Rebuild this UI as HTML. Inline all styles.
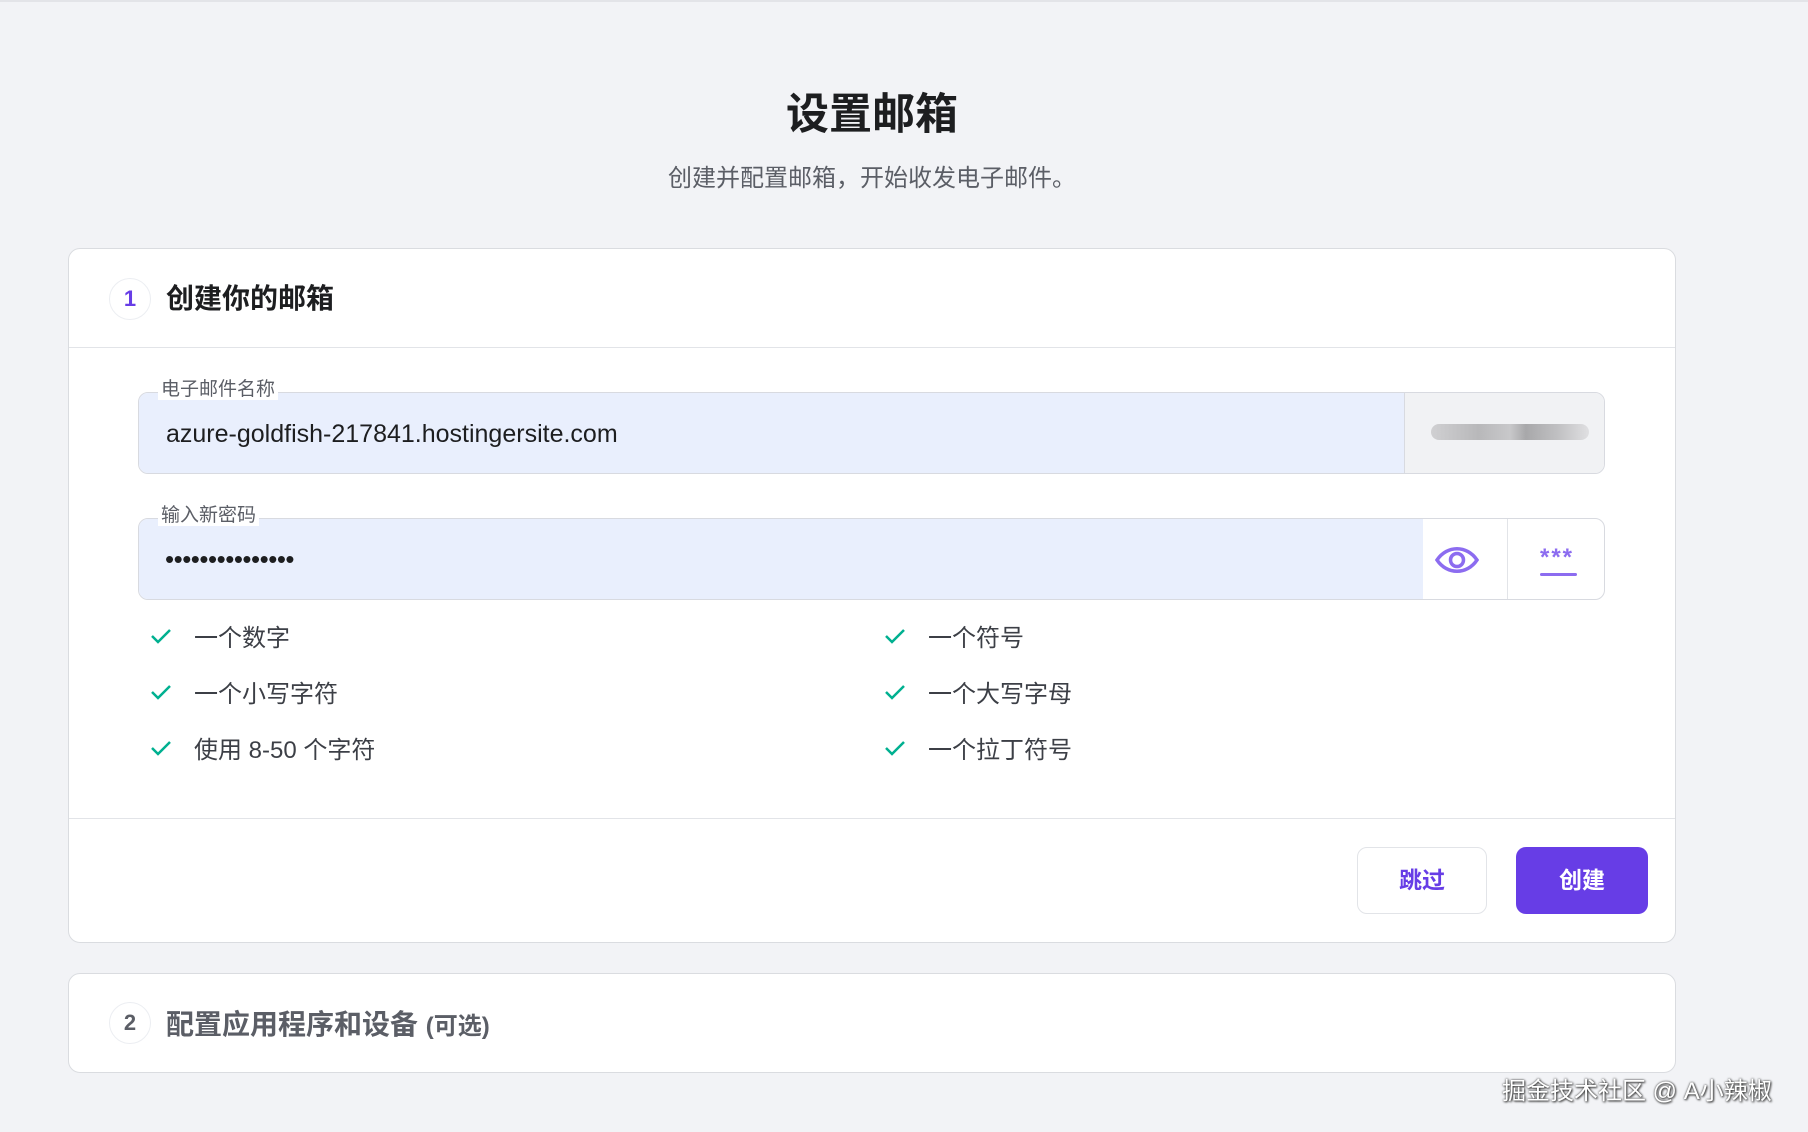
<!DOCTYPE html>
<html><head><meta charset="utf-8"><style>
*{box-sizing:border-box;margin:0;padding:0}
body{width:1808px;height:1132px;background:#f2f3f6;font-family:"Liberation Sans","Noto Sans CJK SC",sans-serif;position:relative;overflow:hidden}
.abs{position:absolute}
h1{position:absolute;left:0;width:1744px;text-align:center;top:80px;font-size:43px;font-weight:700;color:#1d1e20}
.sub{position:absolute;left:0;width:1744px;text-align:center;top:158px;font-size:24px;color:#5b5e66}
.card{position:absolute;left:68px;width:1608px;background:#fff;border:1px solid #dadce0;border-radius:12px}
.circ{position:absolute;left:109px;width:42px;height:42px;border-radius:50%;border:1px solid #eceef2;text-align:center;line-height:40px;font-size:22px;font-weight:700}
.ht{position:absolute;left:166px;font-size:28px;font-weight:700;color:#1d1e20}
.lbl{position:absolute;left:158px;font-size:19px;color:#5b5e66;background:#fff;padding:0 3px;line-height:20px}
.field{position:absolute;left:138px;width:1467px;height:82px;border:1px solid #d8dae0;border-radius:10px;overflow:hidden;background:#fff}
.chk{position:absolute;font-size:24px;color:#3c3f46}
.chk svg{position:absolute;left:-44px;top:9px}
</style></head><body>
<div class="abs" style="left:0;top:0;width:1808px;height:2px;background:#e3e4e8"></div>
<h1>设置邮箱</h1>
<div class="sub">创建并配置邮箱，开始收发电子邮件。</div>

<div class="card" style="top:248px;height:695px"></div>
<div class="abs" style="left:69px;top:347px;width:1606px;height:1px;background:#e2e4e8"></div>
<div class="circ" style="top:278px;color:#673de6">1</div>
<div class="ht" style="top:277px">创建你的邮箱</div>

<div class="field" style="top:392px">
 <div class="abs" style="left:0;top:0;width:1266px;height:82px;background:#e9effd;border-right:1px solid #d8dae0"></div>
 <div class="abs" style="left:1266px;top:0;width:201px;height:82px;background:#f1f2f4"></div>
 <div class="abs" style="left:1292px;top:31px;width:158px;height:16px;border-radius:8px;background:linear-gradient(90deg,#d0d0d2,#b8b8ba 30%,#c8c8ca 50%,#a8a8aa 60%,#c0c0c2 80%,#e0e0e2)"></div>
 <div class="abs" style="left:27px;top:27px;font-size:25px;color:#1d1e20">azure-goldfish-217841.hostingersite.com</div>
</div>
<div class="lbl" style="top:380px">电子邮件名称</div>

<div class="field" style="top:518px">
 <div class="abs" style="left:0;top:0;width:1284px;height:82px;background:#e9effd"></div>
 <div class="abs" style="left:1368px;top:0;width:1px;height:82px;background:#e2e4e8"></div>
 <svg class="abs" style="left:1295px;top:24px" width="46" height="34" viewBox="0 0 46 34"><path d="M3 17 C13 2 33 2 43 17 C33 32 13 32 3 17Z" fill="none" stroke="#8c6cf0" stroke-width="3.5"/><circle cx="23" cy="17" r="6.5" fill="none" stroke="#8c6cf0" stroke-width="3.5"/></svg>
 <div class="abs" style="left:1401px;top:29px;font-size:24px;font-weight:700;color:#8c6cf0;letter-spacing:2px;line-height:20px">***</div>
 <div class="abs" style="left:1401px;top:54px;width:37px;height:3px;border-radius:2px;background:#8c6cf0"></div>
 <div class="abs" style="left:26px;top:25px;font-size:26px;color:#1d1e20;letter-spacing:-0.5px">•••••••••••••••</div>
</div>
<div class="lbl" style="top:506px">输入新密码</div>

<div class="chk" style="left:194px;top:618px"><svg width="22" height="18" viewBox="0 0 22 18"><path d="M2 9 L8 15 L20 3" fill="none" stroke="#00b090" stroke-width="2.5"/></svg>一个数字</div>
<div class="chk" style="left:194px;top:674px"><svg width="22" height="18" viewBox="0 0 22 18"><path d="M2 9 L8 15 L20 3" fill="none" stroke="#00b090" stroke-width="2.5"/></svg>一个小写字符</div>
<div class="chk" style="left:194px;top:730px"><svg width="22" height="18" viewBox="0 0 22 18"><path d="M2 9 L8 15 L20 3" fill="none" stroke="#00b090" stroke-width="2.5"/></svg>使用 8-50 个字符</div>
<div class="chk" style="left:928px;top:618px"><svg width="22" height="18" viewBox="0 0 22 18"><path d="M2 9 L8 15 L20 3" fill="none" stroke="#00b090" stroke-width="2.5"/></svg>一个符号</div>
<div class="chk" style="left:928px;top:674px"><svg width="22" height="18" viewBox="0 0 22 18"><path d="M2 9 L8 15 L20 3" fill="none" stroke="#00b090" stroke-width="2.5"/></svg>一个大写字母</div>
<div class="chk" style="left:928px;top:730px"><svg width="22" height="18" viewBox="0 0 22 18"><path d="M2 9 L8 15 L20 3" fill="none" stroke="#00b090" stroke-width="2.5"/></svg>一个拉丁符号</div>

<div class="abs" style="left:69px;top:818px;width:1606px;height:1px;background:#e2e4e8"></div>
<div class="abs" style="left:1357px;top:847px;width:130px;height:67px;border:1px solid #e2e4e8;border-radius:10px;text-align:center;line-height:65px;font-size:23px;font-weight:700;color:#673de6">跳过</div>
<div class="abs" style="left:1516px;top:847px;width:132px;height:67px;background:#673de6;border-radius:10px;text-align:center;line-height:67px;font-size:23px;font-weight:700;color:#fff">创建</div>

<div class="card" style="top:973px;height:100px"></div>
<div class="circ" style="top:1002px;color:#5b5e66">2</div>
<div class="ht" style="top:1003px;color:#5b5e66">配置应用程序和设备 <span style="font-size:24px">(可选)</span></div>

<div class="abs" style="left:1502px;top:1071px;font-size:24px;color:#fff;text-shadow:0 0 2px #333,1px 1px 2px #333">掘金技术社区 @ A小辣椒</div>
</body></html>
